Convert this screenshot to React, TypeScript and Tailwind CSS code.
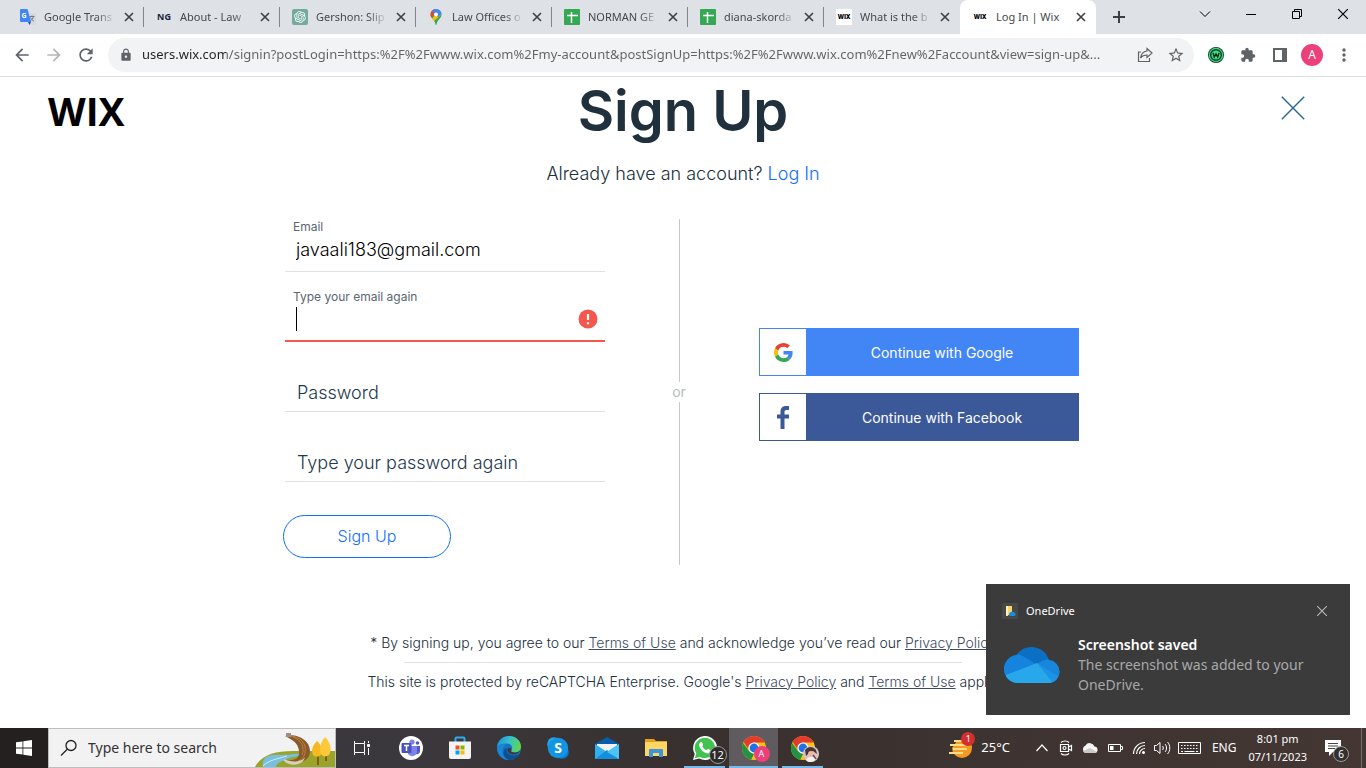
import type { ReactNode } from 'react';
import { MdArrowBack, MdArrowForward, MdExtension, MdLock, MdMoreVert, MdRefresh, MdStarOutline } from 'react-icons/md';
import { RiOpenaiFill } from 'react-icons/ri';

/* ---------- browser chrome ---------- */

function TranslateIcon() {
  return (
    <svg viewBox="0 0 16 16" className="size-4 shrink-0">
      <path d="M6 4h9a1 1 0 0 1 1 1v10a1 1 0 0 1-1 1H9.5z" fill="#d5dae0" />
      <path d="M9.5 7.5h5M12 6.5v1M13.5 7.5c-.4 2-1.8 3.600-3.400 4.500M10.500 8.500c.5 1.500 1.800 2.900 3.200 3.500" stroke="#6b7a80" fill="none" />
      <path d="M1 0h6.500l3.500 13H1a1 1 0 0 1-1-1V1a1 1 0 0 1 1-1z" fill="#4285f4" />
      <path d="M8 13h3l-1.500 3z" fill="#3743c4" />
      <text x="1.500" y="9" fontSize="7" fontWeight="700" fill="#fff" fontFamily="Noto Sans, sans-serif">G</text>
    </svg>
  );
}

function MapsIcon() {
  return (
    <svg viewBox="0 0 16 16" className="size-4 shrink-0">
      <clipPath id="pin">
        <path d="M8 0a5.500 5.500 0 0 0-5.500 5.500c0 2.500 1.500 3.700 3 5.500C6.800 12.600 7.200 14 7.400 15.300c.1.900 1.100.9 1.200 0 .2-1.300.6-2.700 1.900-4.300 1.500-1.800 3-3 3-5.500A5.500 5.500 0 0 0 8 0z" />
      </clipPath>
      <g clipPath="url(#pin)">
        <rect width="16" height="16" fill="#34a853" />
        <path d="M0 13 14 0v5L4 14z" fill="#fbbc04" />
        <path d="M0 0h8L8 4 2 10H0z" fill="#ea4335" />
        <path d="M5 0h11v3L10 8 4.200 2z" fill="#4285f4" />
      </g>
      <circle cx="8" cy="5.500" r="2" fill="#fff" />
    </svg>
  );
}

function SheetsIcon() {
  return (
    <svg viewBox="0 0 16 16" className="size-4 shrink-0">
      <rect width="16" height="16" rx="1" fill="#34a853" />
      <path d="M3 6.500h11M7.500 3v11" stroke="#fff" strokeWidth="1.500" />
    </svg>
  );
}

function WixFavicon() {
  return (
    <span className="flex size-4 shrink-0 items-center justify-center bg-white font-['Open_Sans',sans-serif] text-[6px] leading-none font-extrabold text-black">
      WIX
    </span>
  );
}

const tabs: { title: string; icon: ReactNode; active?: boolean }[] = [
  { title: 'Google Trans', icon: <TranslateIcon /> },
  {
    title: 'About - Law',
    icon: (
      <span className="flex size-4 shrink-0 items-center justify-center font-['Noto_Sans',sans-serif] text-[9px] font-bold text-[#1c2440]">
        NG
      </span>
    ),
  },
  {
    title: 'Gershon: Slip',
    icon: (
      <span className="flex size-4 shrink-0 items-center justify-center rounded-xs bg-[#74aa9c] text-white">
        <RiOpenaiFill className="size-3.5" />
      </span>
    ),
  },
  { title: 'Law Offices o', icon: <MapsIcon /> },
  { title: 'NORMAN GE', icon: <SheetsIcon /> },
  { title: 'diana-skorda', icon: <SheetsIcon /> },
  { title: 'What is the b', icon: <WixFavicon /> },
  { title: 'Log In | Wix', icon: <WixFavicon />, active: true },
];

function Cross({ className }: { className: string }) {
  return (
    <svg viewBox="0 0 10 10" className={className} fill="none" stroke="currentColor">
      <path d="m1 1 8 8M9 1 1 9" />
    </svg>
  );
}

function TabStrip() {
  return (
    <div className="flex h-[34px] items-stretch bg-[#dee1e6] pl-2">
      {tabs.map((tab, i) => (
        <div
          key={tab.title}
          className={`relative flex w-[136px] min-w-0 items-center pr-1.5 pl-3 ${tab.active ? 'rounded-t-lg bg-white' : ''}`}
        >
          {tab.icon}
          <span
            className={`ml-2 min-w-0 flex-1 text-[11px] whitespace-nowrap text-[#45494d] ${tab.active ? '' : '[mask-image:linear-gradient(to_right,#000_52px,transparent_72px)]'}`}
          >
            {tab.title}
          </span>
          <button type="button" aria-label="Close tab" className="p-1 text-[#3c4043]">
            <Cross className="size-2.5 stroke-[1.6]" />
          </button>
          {i < 6 && <span className="absolute right-0 h-5 w-px bg-[#80868b]" />}
        </div>
      ))}
      <button type="button" aria-label="New tab" className="ml-[15px] text-[#3c4043]">
        <svg viewBox="0 0 16 16" className="size-4" stroke="currentColor" strokeWidth="2">
          <path d="M8 2v12M2 8h12" />
        </svg>
      </button>
      <div className="ml-auto flex items-center pb-1.5 text-black">
        <button type="button" aria-label="Search tabs" className="flex w-[46px] justify-center">
          <svg viewBox="0 0 12 12" className="size-3" fill="none" stroke="currentColor">
            <path d="m1 3.500 5 5 5-5" />
          </svg>
        </button>
        <button type="button" aria-label="Minimize" className="flex w-[46px] justify-center">
          <span className="h-px w-2.5 bg-black" />
        </button>
        <button type="button" aria-label="Restore" className="flex w-[46px] justify-center">
          <svg viewBox="0 0 12 12" className="size-3" fill="none" stroke="currentColor">
            <path d="M1.500 3.500h7v7h-7zM3.500 3V1.500h7v7H9" />
          </svg>
        </button>
        <button type="button" aria-label="Close" className="flex w-[46px] justify-center">
          <Cross className="size-3" />
        </button>
      </div>
    </div>
  );
}

function Toolbar() {
  return (
    <div className="flex h-[43px] items-center border-b border-[#dadce0] bg-white pr-1.5 pl-3 text-[#5f6368]">
      <button type="button" aria-label="Back" className="mr-3">
        <MdArrowBack className="size-5" />
      </button>
      <button type="button" aria-label="Forward" className="mr-3 text-[#b4b6b9]">
        <MdArrowForward className="size-5" />
      </button>
      <button type="button" aria-label="Reload" className="mr-3">
        <MdRefresh className="size-5" />
      </button>
      <div className="flex h-[34px] min-w-0 flex-1 items-center rounded-full bg-[#f1f3f4] pr-2 pl-[11px]">
        <MdLock className="size-3.5 shrink-0" />
        <input
          aria-label="Address and search bar"
          className="ml-[9px] min-w-0 flex-1 bg-[linear-gradient(to_right,#202124_84px,#5f6368_84px)] bg-clip-text text-[13px] text-transparent outline-none"
          defaultValue="users.wix.com/signin?postLogin=https:%2F%2Fwww.wix.com%2Fmy-account&postSignUp=https:%2F%2Fwww.wix.com%2Fnew%2Faccount&view=sign-up&..."
        />
        <button type="button" aria-label="Share" className="mr-2 ml-1.5 shrink-0">
          <svg viewBox="0 0 16 16" className="size-4" fill="none" stroke="currentColor" strokeWidth="1.200">
            <path d="M4 5H1.500v9.500h11V11M10 1.500 15 6l-5 4.500V8C7 8 5 9 3.500 11 4 7.500 6 4.500 10 4z" />
          </svg>
        </button>
        <button type="button" aria-label="Bookmark" className="mr-px ml-1.5 shrink-0">
          <MdStarOutline className="size-[18px]" />
        </button>
      </div>
      <div className="ml-1.5 flex shrink-0 items-center">
        <button type="button" aria-label="W extension" className="flex w-8 justify-center">
          <svg viewBox="0 0 16 16" className="size-4">
            <circle cx="8" cy="8" r="8" fill="#0d3b23" />
            <circle cx="8" cy="8" r="6.600" fill="none" stroke="#3ddc84" strokeWidth="1.200" />
            <circle cx="8" cy="8" r="4.600" fill="#3ddc84" />
            <path d="m5 6 1.300 4L8 7l1.700 3L11 6" fill="none" stroke="#0d2b1a" strokeWidth="1.400" />
          </svg>
        </button>
        <button type="button" aria-label="Extensions" className="flex w-8 justify-center">
          <MdExtension className="size-4" />
        </button>
        <button type="button" aria-label="Side panel" className="flex w-8 justify-center">
          <svg viewBox="0 0 14 14" className="size-3.5">
            <path d="M1 1h12v12H1z" fill="none" stroke="currentColor" strokeWidth="2" />
            <path d="M9 1h4v12H9z" fill="currentColor" />
          </svg>
        </button>
        <button type="button" aria-label="Profile" className="flex w-8 justify-center">
          <span className="flex size-[22px] items-center justify-center rounded-full bg-[#ec407a] text-xs text-white">A</span>
        </button>
        <button type="button" aria-label="Menu" className="flex w-8 justify-center">
          <MdMoreVert className="size-5" />
        </button>
      </div>
    </div>
  );
}

/* ---------- sign up page ---------- */

const label = 'block h-4 pl-2 text-xs leading-4 text-[#5a6672]';
const restingLabel = 'pointer-events-none absolute top-0 left-3 text-[18px] leading-9 font-light text-[#22384d]';
const input = 'block h-[37px] w-full border-b border-[#dfe1e3] pl-[11px] text-[18px] font-light text-black outline-none';
const link = 'text-[#3d4a60] underline';

function SignUpForm() {
  return (
    <form className="mr-[67px] w-80" onSubmit={(e) => e.preventDefault()}>
      <label htmlFor="email" className={label}>Email</label>
      <input id="email" type="text" defaultValue="javaali183@gmail.com" className={`${input} pb-2`} />

      <div className="relative mt-[17px]">
        <label htmlFor="email-again" className={label}>Type your email again</label>
        <input id="email-again" type="text" className="block h-[37px] w-full border-b-2 border-[#f4574e] pl-[11px] text-[18px] font-light outline-none" />
        <span className="absolute top-[18px] left-[11px] h-6 w-px bg-black" />
        <svg viewBox="0 0 20 20" className="absolute top-5 right-[7px] size-5">
          <circle cx="10" cy="10" r="9.500" fill="#f4574e" />
          <path d="M10 5v6M10 13.200v2" stroke="#fff" strokeWidth="2.200" />
        </svg>
      </div>

      <div className="relative mt-[33px]">
        <label htmlFor="password" className={restingLabel}>Password</label>
        <input id="password" type="password" className={input} />
      </div>
      <div className="relative mt-[33px]">
        <label htmlFor="password-again" className={restingLabel}>Type your password again</label>
        <input id="password-again" type="password" className={input} />
      </div>

      <button type="submit" className="mt-[33px] -ml-0.5 block h-[43px] w-[168px] rounded-full border border-[#116dff] pb-0.5 text-base font-light text-[#116dff]">
        Sign Up
      </button>
    </form>
  );
}

function GoogleG() {
  return (
    <svg viewBox="0 0 48 48" className="size-[19px]">
      <path fill="#ea4335" d="M24 9.500c3.540 0 6.710 1.220 9.210 3.600l6.850-6.850C35.900 2.380 30.470 0 24 0 14.620 0 6.510 5.380 2.560 13.220l7.980 6.190C12.430 13.720 17.740 9.500 24 9.500z" />
      <path fill="#4285f4" d="M46.980 24.550c0-1.570-.15-3.090-.38-4.550H24v9.020h12.940c-.58 2.960-2.260 5.480-4.780 7.180l7.730 6c4.510-4.180 7.090-10.360 7.090-17.650z" />
      <path fill="#fbbc05" d="M10.530 28.590c-.48-1.450-.76-2.990-.76-4.590s.27-3.140.76-4.590l-7.980-6.190C.92 16.460 0 20.120 0 24c0 3.880.92 7.540 2.560 10.780l7.970-6.190z" />
      <path fill="#34a853" d="M24 48c6.480 0 11.930-2.130 15.890-5.810l-7.730-6c-2.150 1.450-4.920 2.300-8.160 2.300-6.260 0-11.570-4.220-13.470-9.910l-7.980 6.190C6.510 42.620 14.620 48 24 48z" />
    </svg>
  );
}

function FacebookMark() {
  return (
    <svg viewBox="0 0 12 23" className="h-[23px] w-3" fill="#3b5998">
      <path d="M3.500 23V12.500H0V8.500h3.500V6c0-4 2-6 5.500-6h3v4H9.500C8 4 7.500 4.700 7.500 6v2.500H12v4H7.500V23z" />
    </svg>
  );
}

function SocialButtons() {
  return (
    <div className="mt-[109px] flex w-80 flex-col gap-[17px] text-sm text-white">
      <button type="button" className="flex h-12 border border-[#4285f4] bg-[#4285f4]">
        <span className="flex h-full w-[46px] items-center justify-center bg-white"><GoogleG /></span>
        <span className="flex-1 self-center pt-0.5">Continue with Google</span>
      </button>
      <button type="button" className="flex h-12 border border-[#3b5998] bg-[#3b5998]">
        <span className="flex h-full w-[46px] items-center justify-center bg-white"><FacebookMark /></span>
        <span className="flex-1 self-center pt-0.5">Continue with Facebook</span>
      </button>
    </div>
  );
}

function SignUpPage() {
  return (
    <main className="relative flex-1 bg-white font-['Inter',sans-serif] text-[#20303c]">
      <header className="grid grid-cols-[1fr_auto_1fr] items-center px-12 pt-0.5">
        <a href="#home" aria-label="Wix" className="justify-self-start font-['Open_Sans',sans-serif] text-[39px] leading-[64px] font-bold text-black">
          WIX
        </a>
        <h1 className="text-[56px] leading-[64px] font-semibold">Sign Up</h1>
        <button type="button" aria-label="Close" className="mr-[11px] mb-1.5 justify-self-end text-[#2a6592]">
          <Cross className="size-7 stroke-[0.5]" />
        </button>
      </header>
      <p className="mt-[17px] text-center text-[18px] leading-7 font-light">
        Already have an account? <a href="#login" className="text-[#116dff]">Log In</a>
      </p>

      <div className="mt-[31px] flex justify-center pr-0.5">
        <SignUpForm />
        <div className="mr-[73px] flex h-[346px] w-3.5 flex-col items-center text-sm leading-5 text-[#b6bcc2]">
          <span className="h-[163px] w-px bg-[#c6c8ca]" />
          or
          <span className="w-px flex-1 bg-[#c6c8ca]" />
        </div>
        <SocialButtons />
      </div>

      <footer className="mt-[68px] text-center text-sm leading-5 font-light">
        <p>
          * By signing up, you agree to our <a href="#terms" className={link}>Terms of Use</a> and acknowledge you’ve read our{' '}
          <a href="#privacy" className={link}>Privacy Policy</a>
        </p>
        <hr className="mx-auto mt-[9px] mb-[9px] w-[558px] border-[#dfe1e3]" />
        <p>
          This site is protected by reCAPTCHA Enterprise. Google's <a href="#gprivacy" className={link}>Privacy Policy</a> and{' '}
          <a href="#gterms" className={link}>Terms of Use</a> apply.
        </p>
      </footer>
      <Toast />
    </main>
  );
}

function Toast() {
  return (
    <aside className="absolute right-4 bottom-[13px] h-[131px] w-[364px] bg-[#3b3b3b] px-4 pt-[17px] font-['Noto_Sans',sans-serif] text-white">
      <div className="flex items-center">
        <span className="flex size-4 items-center justify-center bg-[#484848]">
          <svg viewBox="0 0 12 12" className="size-3">
            <path d="M2 1h6v9H5l-3 1z" fill="#fbd56c" />
            <path d="M2 1h2v10l-2-.500z" fill="#fff0b8" />
            <path d="M6 11a2 2 0 0 1 0-3.500 2.400 2.400 0 0 1 4 0A1.800 1.800 0 0 1 10.500 11z" fill="#1490df" />
          </svg>
        </span>
        <span className="ml-2 text-[11px] leading-5">OneDrive</span>
        <button type="button" aria-label="Dismiss" className="mr-1.5 ml-auto text-[#b5b5b5]">
          <Cross className="size-3" />
        </button>
      </div>
      <div className="mt-3.5 flex">
        <svg viewBox="0 0 56 36" className="mt-3 ml-0.5 h-9 w-14 shrink-0">
          <clipPath id="cloud">
            <circle cx="14" cy="22" r="14" />
            <circle cx="27.500" cy="18" r="18" />
            <circle cx="44" cy="24.500" r="11.500" />
            <path d="M14 20h30v16H14z" />
          </clipPath>
          <g clipPath="url(#cloud)">
            <rect width="56" height="36" fill="#0b6fc4" />
            <path d="M0 9c9-4 16-2 22 2l13 8L2 36H0z" fill="#1683dd" />
            <path d="M33 17c6-5 14-6 23-3v19z" fill="#1986de" />
            <path d="m2 28 31-12 20 15v5H2z" fill="#28a8ea" />
            <path d="m33 16 22 14v6h-6z" fill="#1c93e4" />
          </g>
        </svg>
        <div className="ml-[18px] text-sm leading-5">
          <p className="font-semibold">Screenshot saved</p>
          <p className="text-[#a8a8a8]">The screenshot was added to your OneDrive.</p>
        </div>
      </div>
    </aside>
  );
}

/* ---------- windows taskbar ---------- */

function SearchArt() {
  return (
    <svg viewBox="0 0 80 38" className="h-[38px] w-20 shrink-0">
      <path d="M0 38C6 26 20 22 38 22h42v16z" fill="#9aa32a" />
      <path d="M8 38C6 28 14 25 26 26c8 0 14-2 22-1-6 3-14 3-18 6-4 2-8 2-9 7z" fill="#79bfe0" />
      <path d="M8 37c6-6 14-7 24-10" stroke="#d5edf6" fill="none" />
      <path d="M30 7c10-3 25 3 25 15 0 11-14 15-24 9 10 1 14-3 13-9C43 14 38 11 30 7z" fill="#8b5a2b" />
      <path d="M34 7c12 0 18 8 16 17-1 5-5 8-9 9M38 8c9 3 12 11 9 18" stroke="#b98044" fill="none" />
      <path d="M29 30c8 4 18 3 21-2-2 9-15 10-21 4z" fill="#d8d0bc" />
      <path d="M31 4h5v4h-5z" fill="#a08d84" />
      <path d="M63 24v12M71 20v12" stroke="#8a5a10" strokeWidth="2" />
      <path d="M62 12c5 5 6 10 4 14-2 2-6 2-8 0-2-4-1-9 4-14z" fill="#f5b81e" />
      <path d="M70 8c6 6 7 13 4 18-3 2-6 2-8-1-2-5-1-11 4-17z" fill="#fdc93a" />
    </svg>
  );
}

function Chrome({ id }: { id: string }) {
  return (
    <svg viewBox="0 0 24 24" className="size-6">
      <clipPath id={id}><circle cx="12" cy="12" r="12" /></clipPath>
      <g clipPath={`url(#${id})`}>
        <rect width="24" height="24" fill="#fbc116" />
        <path d="M-1 4 7 15l5 3-4 8H-2z" fill="#229342" />
        <path d="M1 5 6 0h13l5 6.500H12A5.500 5.500 0 0 0 7 14z" fill="#e33b2e" />
      </g>
      <circle cx="12" cy="12" r="5.600" fill="#fff" />
      <circle cx="12" cy="12" r="4.400" fill="#1a73e8" />
    </svg>
  );
}

const apps: { name: string; icon: ReactNode; state?: 'open' | 'active' }[] = [
  {
    name: 'Task View',
    icon: (
      <svg viewBox="0 0 18 18" className="size-[18px]" fill="none" stroke="#fff">
        <path d="M1.500 2v2.500h10V2M1.500 16v-2.500h10V16M1.500 4.500v9M11.500 4.500v9M15.500 2v2M15.500 9v7" />
        <path d="M14.500 5.500h2v2h-2z" fill="#fff" />
      </svg>
    ),
  },
  {
    name: 'Teams',
    icon: (
      <svg viewBox="0 0 24 24" className="size-6">
        <circle cx="12" cy="12" r="12" fill="#fff" />
        <circle cx="13" cy="6" r="2.600" fill="#7b83eb" />
        <circle cx="18.500" cy="7" r="1.800" fill="#5059c9" />
        <path d="M17 10h4v5a3 3 0 0 1-4 3z" fill="#5059c9" />
        <path d="M9 10h9v6a5 5 0 0 1-9 2z" fill="#7b83eb" />
        <rect x="2.500" y="7" width="10" height="10" rx="1" fill="#4b53bc" />
        <path d="M5 9.500h5M7.500 9.500V15" stroke="#fff" strokeWidth="1.500" />
      </svg>
    ),
  },
  {
    name: 'Microsoft Store',
    icon: (
      <svg viewBox="0 0 24 24" className="size-6">
        <path d="M7.500 7V2.500a1 1 0 0 1 1-1h7a1 1 0 0 1 1 1V7" stroke="#2ab0ee" strokeWidth="2" fill="none" />
        <path d="M1 5.500h22V21a2 2 0 0 1-2 2H3a2 2 0 0 1-2-2z" fill="#f3f3f3" />
        <path d="M7.500 9.500h4v4h-4z" fill="#f25022" />
        <path d="M12.500 9.500h4v4h-4z" fill="#7fba00" />
        <path d="M7.500 14.500h4v4h-4z" fill="#00a4ef" />
        <path d="M12.500 14.500h4v4h-4z" fill="#ffb900" />
      </svg>
    ),
  },
  {
    name: 'Edge',
    icon: (
      <svg viewBox="0 0 24 24" className="size-6">
        <defs>
          <linearGradient id="edge" x1="0" y1="0.300" x2="1" y2="0.500">
            <stop offset="0" stopColor="#2193d8" />
            <stop offset="0.500" stopColor="#36c3c9" />
            <stop offset="1" stopColor="#61d64a" />
          </linearGradient>
        </defs>
        <circle cx="12" cy="12" r="12" fill="#1373c4" />
        <path d="M.2 10C1.200 4 6 0 12 0c7 0 12 5 12 10.500 0 4-3 6-6.500 6-3 0-4-1-3-2.500 1.500-2 .5-6.500-5-6.500C5 7.500 1.500 9 .2 11z" fill="url(#edge)" />
        <path d="M9.500 8.500C4 10 3 22 13 23.900 7 24.500 0 20 0 12c1-3.500 6-5 9.500-3.500z" fill="#1a86d6" />
        <path d="M9.800 12c-1.500 5 4 10 12.500 6-2 3.600-5.500 6-10 6C5 22 5 13 9.800 12z" fill="#0d4f91" />
        <path d="M14.500 14c-1 1.500 0 2.500 3 2.500 2 0 4-.5 5.500-2-1 2.500-3.500 4-6.500 4-4 0-6.500-2.500-6-5.500 1-2 3.500-1.500 4 1z" fill="#3c393f" />
      </svg>
    ),
  },
  {
    name: 'Skype',
    icon: (
      <svg viewBox="0 0 24 24" className="size-6">
        <circle cx="8" cy="8" r="6.800" fill="#28a8ea" />
        <circle cx="16" cy="16" r="6.800" fill="#0a7ad6" />
        <circle cx="12" cy="12" r="10.200" fill="#1296e3" />
        <text x="12" y="17" textAnchor="middle" fontSize="14" fontWeight="700" fill="#fff" fontFamily="Noto Sans, sans-serif">S</text>
      </svg>
    ),
  },
  {
    name: 'Mail',
    icon: (
      <svg viewBox="0 0 24 24" className="size-6">
        <path d="M0 8 12 1l12 7v3H0z" fill="#0a5cad" />
        <path d="M2 8h20v8H2z" fill="#f2f2f2" />
        <path d="m0 8 12 8 12-8v15H0z" fill="#31b0f0" />
        <path d="m0 23 12-9 12 9z" fill="#1490df" />
        <path d="m12 16 12-8v15z" fill="#4cc4f6" />
      </svg>
    ),
  },
  {
    name: 'File Explorer',
    icon: (
      <svg viewBox="0 0 24 24" className="size-6">
        <path d="M1 3h9l2 2h11v5H1z" fill="#e3a21a" />
        <path d="M1 6h22v14H1z" fill="#fdd663" />
        <path d="M5 21v-7a1 1 0 0 1 1-1h12a1 1 0 0 1 1 1v7h-4v-4H9v4z" fill="#3b96dd" />
      </svg>
    ),
  },
  {
    name: 'WhatsApp',
    state: 'open',
    icon: (
      <span className="relative">
        <svg viewBox="0 0 24 24" className="size-6">
          <path d="M0 24 1.700 18A12 12 0 1 1 6.300 22.500z" fill="#fff" />
          <path d="M1.800 22.200 3.300 17.500A10.200 10.200 0 1 1 7 20.900z" fill="#40c351" />
          <path d="M7.200 6.500c.8-.8 1.700-.6 2 .1l.9 2c.2.5-.3 1.100-.8 1.700.9 1.900 2.300 3.200 4.300 4 .6-.7 1.100-1.500 1.700-1.200l2.100 1c.9.500.3 2.100-.6 2.700-1.400.9-3 .7-5-.3-2.300-1.100-4.200-3-5.200-5.200-.7-1.700-.6-3.600.6-4.800z" fill="#fff" />
        </svg>
        <span className="absolute -right-2.5 -bottom-1 flex size-[18px] items-center justify-center rounded-full border border-[#9a9a9a] bg-[#2e2a2a] text-[11px] text-white">
          12
        </span>
      </span>
    ),
  },
  {
    name: 'Chrome (profile A)',
    state: 'active',
    icon: (
      <span className="relative">
        <Chrome id="chrome-a" />
        <span className="absolute -right-1 -bottom-0.5 flex size-4 items-center justify-center rounded-full bg-[#ec407a] text-[9px] text-white">
          A
        </span>
      </span>
    ),
  },
  {
    name: 'Chrome',
    state: 'open',
    icon: (
      <span className="relative">
        <Chrome id="chrome-b" />
        <svg viewBox="0 0 16 16" className="absolute -right-1 -bottom-0.5 size-4">
          <circle cx="8" cy="8" r="8" fill="#d9c3c0" />
          <path d="M2 4c3-4 8-4 11 0l1 4-4-3-4 2-3 3z" fill="#4a3434" />
          <circle cx="8" cy="8" r="3" fill="#eab8a4" />
          <path d="M3 14c2-4 8-4 10-1-3 4-8 4-10 1z" fill="#f4f0ee" />
          <path d="m10 9 3 4" stroke="#7c4a50" strokeWidth="1.500" />
        </svg>
      </span>
    ),
  },
];

function Tray() {
  return (
    <div className="ml-auto flex shrink-0 items-center text-white">
      <button type="button" className="mr-[25px] flex items-center text-[13px]">
        <span className="relative mr-2">
          <svg viewBox="0 0 24 24" className="size-6">
            <path d="M3 12a10 10 0 0 0 20 0 9 9 0 0 0-3-7H8z" fill="#f59b23" />
            <path d="M5 5h10M1 9h16M4 13h14M0 17h14" stroke="#fbdc8b" strokeWidth="2" />
          </svg>
          <span className="absolute -top-1 -right-0.5 flex size-3.5 items-center justify-center rounded-full bg-[#d32f2f] text-[9px]">1</span>
        </span>
        25°C
      </button>
      <svg viewBox="0 0 14 14" className="mr-[9px] size-3.5" fill="none" stroke="#fff" strokeWidth="1.200">
        <path d="m1.500 10 5.500-6 5.500 6" />
      </svg>
      <svg viewBox="0 0 16 16" className="mr-[7px] size-4" fill="none" stroke="#fff" strokeWidth="1.200">
        <path d="M2.500 4.500h8v7h-8zM10.500 7l3-1.500v5l-3-1.500M3 2.500C5 .5 9 .5 11 2.500M3 13.500c2 2 6 2 8 0" />
        <circle cx="6.500" cy="8" r="1.500" />
      </svg>
      <svg viewBox="0 0 18 18" className="mr-2 size-[18px]">
        <path d="M4.500 14a4 4 0 0 1 0-7.500 5 5 0 0 1 9 1A3.300 3.300 0 0 1 14 14z" fill="#f5f5f5" />
        <path d="m2 12 7-3 7 4-2 1H4z" fill="#c9c9c9" />
      </svg>
      <svg viewBox="0 0 16 16" className="mr-[9px] size-4" fill="none" stroke="#fff">
        <path d="M1.500 4.500h12v7h-12zM14 6.500h1.500v3H14" />
        <path d="M3 6h3.500v4H3z" fill="#fff" stroke="none" />
      </svg>
      <svg viewBox="0 0 14 14" className="mr-[7px] size-3.5" fill="none" stroke="#fff" strokeWidth="1.200">
        <path d="M1.500 13A11.500 11.500 0 0 1 13 1.500M4.500 13A8.500 8.500 0 0 1 13 4.500M7.500 13A5.500 5.500 0 0 1 13 7.500" />
        <circle cx="11.500" cy="11.500" r="1.500" fill="#fff" stroke="none" />
      </svg>
      <svg viewBox="0 0 18 16" className="mr-[7px] h-4 w-[18px]" fill="none" stroke="#fff">
        <path d="M1.500 5.500h2L7 2.500v11l-3.500-3h-2zM9.500 6c1 1 1 3 0 4M12 4c2 2 2 6 0 8M14.500 2c3 3 3 9 0 12" />
      </svg>
      <svg viewBox="0 0 24 14" className="mr-2.5 h-3.5 w-6" fill="none" stroke="#fff">
        <path d="M.5 1.500h22v11H.5z" />
        <path d="M3 4.500h18M3 7.500h18" strokeDasharray="1.500 1.500" />
        <path d="M3 10.500h2M6.500 10.500h10M18 10.500h2" />
      </svg>
      <span className="mr-3 text-xs">ENG</span>
      <time className="mr-[18px] text-center text-[11px] leading-[18px]">
        8:01 pm
        <br />
        07/11/2023
      </time>
      <span className="relative mr-3">
        <svg viewBox="0 0 16 16" className="size-4">
          <path d="M0 0h16v12H8l-4 4v-4H0z" fill="#fff" />
          <path d="M3 3.500h10M3 6h10M3 8.500h7" stroke="#4a4444" />
        </svg>
        <span className="absolute -right-2 -bottom-1.5 flex size-4 items-center justify-center rounded-full border border-[#9a9a9a] bg-[#333030] text-[10px]">
          6
        </span>
      </span>
      <span className="mr-1 ml-2 h-10 w-px bg-[#77706f]" />
    </div>
  );
}

function Taskbar() {
  return (
    <nav aria-label="Taskbar" className="flex h-10 items-center bg-linear-to-r from-[#3b383d] from-30% via-[#38302f] via-50% to-[#443733]">
      <button type="button" aria-label="Start" className="flex h-10 w-12 shrink-0 items-center justify-center bg-[#23201f]">
        <svg viewBox="0 0 16 16" className="size-4" fill="#fff">
          <path d="M0 2.300 6.500 1.400v6.100H0zM7.300 1.300 16 0v7.500H7.300zM0 8.400h6.500v6.200L0 13.700zM7.300 8.400H16V16l-8.700-1.300z" />
        </svg>
      </button>
      <label className="mr-px flex h-10 w-72 shrink-0 items-center border border-[#bdbdbd] bg-[#f2f2f2] pl-[11px]">
        <svg viewBox="0 0 18 18" className="size-[18px] shrink-0" fill="none" stroke="#222" strokeWidth="1.300">
          <circle cx="11" cy="6.500" r="5" />
          <path d="M7.500 10 1 16.500" />
        </svg>
        <input aria-label="Search" type="text" placeholder="Type here to search" className="ml-2.5 min-w-0 flex-1 text-sm outline-none placeholder:text-[#333]" />
        <SearchArt />
      </label>
      {apps.map((app) => (
        <button
          key={app.name}
          type="button"
          aria-label={app.name}
          className={`relative flex h-10 w-[49px] shrink-0 items-center justify-center ${app.state === 'active' ? 'bg-[#5f5b5e]' : ''}`}
        >
          {app.icon}
          {app.state === 'open' && <span className="absolute inset-x-1 bottom-0 h-0.5 bg-[#76b9ed]" />}
          {app.state === 'active' && <span className="absolute inset-x-0 bottom-0 h-0.5 bg-[#76b9ed]" />}
        </button>
      ))}
      <Tray />
    </nav>
  );
}

export default function App() {
  return (
    <div className="flex min-h-screen flex-col font-['Noto_Sans',sans-serif]">
      <TabStrip />
      <Toolbar />
      <SignUpPage />
      <Taskbar />
    </div>
  );
}
